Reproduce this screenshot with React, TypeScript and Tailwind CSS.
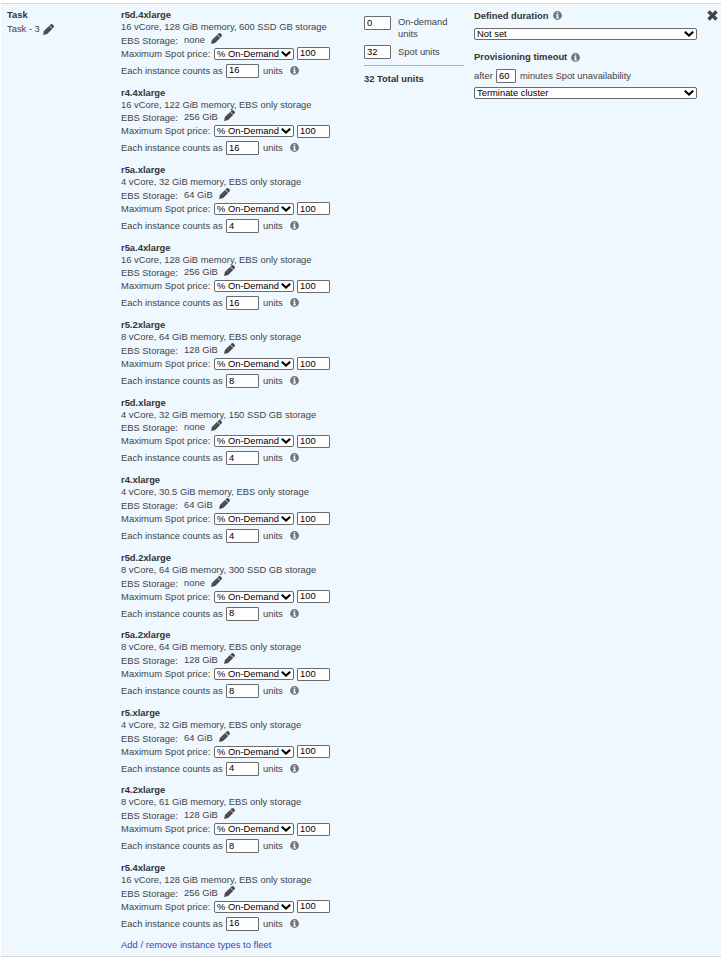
import React from "react";

type Instance = { name: string; spec: string; ebs: string; units: number };

const INSTANCES: Instance[] = [
  { name: "r5d.4xlarge", spec: "16 vCore, 128 GiB memory, 600 SSD GB storage", ebs: "none", units: 16 },
  { name: "r4.4xlarge", spec: "16 vCore, 122 GiB memory, EBS only storage", ebs: "256 GiB", units: 16 },
  { name: "r5a.xlarge", spec: "4 vCore, 32 GiB memory, EBS only storage", ebs: "64 GiB", units: 4 },
  { name: "r5a.4xlarge", spec: "16 vCore, 128 GiB memory, EBS only storage", ebs: "256 GiB", units: 16 },
  { name: "r5.2xlarge", spec: "8 vCore, 64 GiB memory, EBS only storage", ebs: "128 GiB", units: 8 },
  { name: "r5d.xlarge", spec: "4 vCore, 32 GiB memory, 150 SSD GB storage", ebs: "none", units: 4 },
  { name: "r4.xlarge", spec: "4 vCore, 30.5 GiB memory, EBS only storage", ebs: "64 GiB", units: 4 },
  { name: "r5d.2xlarge", spec: "8 vCore, 64 GiB memory, 300 SSD GB storage", ebs: "none", units: 8 },
  { name: "r5a.2xlarge", spec: "8 vCore, 64 GiB memory, EBS only storage", ebs: "128 GiB", units: 8 },
  { name: "r5.xlarge", spec: "4 vCore, 32 GiB memory, EBS only storage", ebs: "64 GiB", units: 4 },
  { name: "r4.2xlarge", spec: "8 vCore, 61 GiB memory, EBS only storage", ebs: "128 GiB", units: 8 },
  { name: "r5.4xlarge", spec: "16 vCore, 128 GiB memory, EBS only storage", ebs: "256 GiB", units: 16 },
];

function Pencil({ className = "" }: { className?: string }) {
  return (
    <svg viewBox="0 0 11 11" className={`block h-[11px] w-[11px] shrink-0 ${className}`} fill="#484848">
      <path d="M0.1 10.9 L0.9 6.9 L6 1.9 L9.2 5 L4.1 10 Z" />
      <path d="M6.4 1.5 L7.5 0.5 Q8.6 -0.3 9.7 0.6 L10.4 1.3 Q11.3 2.3 10.5 3.5 L9.6 4.6 Z" />
      <path d="M2.8 7.6 L6.4 4.1" stroke="#7d8083" strokeWidth="0.5" />
    </svg>
  );
}

function Info({ className = "" }: { className?: string }) {
  return (
    <svg viewBox="0 0 10 10" className={`block h-[9px] w-[9px] shrink-0 ${className}`}>
      <circle cx="5" cy="5" r="4.9" fill="#747474" />
      <path d="M4.1 1.3h1.8v1.5H4.1zM3.4 3.7h2.5v3.5h.8v1.1H3.3V7.2h.8V4.8h-.7z" fill="#eff7ff" />
    </svg>
  );
}

function Field({ value, className }: { value: string | number; className: string }) {
  return (
    <input
      readOnly
      value={value}
      className={`block shrink-0 rounded-[1px] border border-[#6b6b6b] bg-white p-0 pb-[1.5px] pl-[2px] text-[9.4px] leading-[10px] text-black outline-none ${className}`}
    />
  );
}

function Select({ value, className }: { value: string; className: string }) {
  return (
    <div className={`grid shrink-0 ${className}`}>
      <select
        defaultValue={value}
        className="col-start-1 row-start-1 h-full w-full appearance-none rounded-[2px] border border-[#6b6b6b] bg-white p-0 pl-[2px] text-[9.4px] leading-[10px] text-black outline-none"
      >
        <option>{value}</option>
      </select>
      <svg
        viewBox="0 0 10 6"
        className="pointer-events-none col-start-1 row-start-1 mr-[3px] h-[6px] w-[10px] self-center justify-self-end"
        fill="none"
        stroke="#000"
        strokeWidth="2.1"
      >
        <path d="M0.8 0.8 L5 4.5 L9.2 0.8" />
      </svg>
    </div>
  );
}

function InstanceBlock({ item }: { item: Instance }) {
  return (
    <div className="h-[77.55px]">
      <div className="h-3 font-bold leading-3 text-[#333]">{item.name}</div>
      <div className="h-[12.7px] leading-3">{item.spec}</div>
      <div className="flex h-[13.5px] leading-[14px]">
        <span className="w-[63px]">EBS Storage:</span>
        <span className="-mt-px">{item.ebs}</span>
        <Pencil className="-mt-px ml-[6px]" />
      </div>
      <div className="flex h-[13px] items-center">
        <span className="w-[93px] tracking-[0.07px]">Maximum Spot price:</span>
        <Select value="% On-Demand" className="h-3 w-20" />
        <Field value="100" className="ml-[3px] h-[13px] w-[33px]" />
      </div>
      <div className="mt-[3.5px] flex h-[14px] items-center">
        <span className="w-[105px]">Each instance counts as</span>
        <Field value={item.units} className="h-[14px] w-[33px]" />
        <span className="ml-1 w-[27px]">units</span>
        <Info className="-mt-px" />
      </div>
    </div>
  );
}

export default function App() {
  return (
    <div className="h-[957px] w-[726px] overflow-hidden bg-white pl-px pt-[3px] font-['Liberation_Sans',Arial,sans-serif] text-[9.4px] leading-3 text-[#444]">
      <div className="flex h-[954px] w-[720px] border-y border-[#d5d8da] bg-[#eff7ff] pt-[5px]">
        <div className="w-[120px] pl-[6px]">
          <div className="font-bold text-[#333]">Task</div>
          <div className="mt-[2px] flex items-center">
            <span className="w-[36px]">Task - 3</span>
            <Pencil />
          </div>
        </div>

        <div className="w-[243px]">
          {INSTANCES.map((item) => (
            <InstanceBlock key={item.name} item={item} />
          ))}
          <a className="-mt-px block leading-3 tracking-[0.04px] text-[#2a4bb5]">
            Add / remove instance types to fleet
          </a>
        </div>

        <div className="w-[110px] pt-[7px]">
          <div className="flex">
            <Field value="0" className="h-[14px] w-[27px]" />
            <span className="ml-[7px] w-[60px]">On-demand units</span>
          </div>
          <div className="mt-[5px] flex items-center">
            <Field value="32" className="h-[14px] w-[27px]" />
            <span className="ml-[7px]">Spot units</span>
          </div>
          <div className="mt-[6px] h-px w-[100px] bg-[#aeb4ba]" />
          <div className="mt-[7px] font-bold text-[#333]">32 Total units</div>
        </div>

        <div className="w-[233px] pt-px">
          <div className="flex items-center font-bold text-[#333]">
            <span>Defined duration</span>
            <Info className="-mt-px ml-[5px]" />
          </div>
          <Select value="Not set" className="mt-[6px] h-3 w-[223px]" />
          <div className="mt-[11px] flex items-center font-bold text-[#333]">
            <span>Provisioning timeout</span>
            <Info className="ml-[4px]" />
          </div>
          <div className="mt-[6px] flex h-[14px] items-center">
            <span className="w-[22px]">after</span>
            <Field value="60" className="h-[14px] w-5" />
            <span className="ml-1">minutes Spot unavailability</span>
          </div>
          <Select value="Terminate cluster" className="mt-1 h-3 w-[223px]" />
        </div>

        <svg viewBox="0 0 11 11" className="mt-[1px] h-[11px] w-[11px]" fill="#444">
          <path d="M2.7 0.3 L5.5 3.1 L8.3 0.3 L10.7 2.7 L7.9 5.5 L10.7 8.3 L8.3 10.7 L5.5 7.9 L2.7 10.7 L0.3 8.3 L3.1 5.5 L0.3 2.7 Z" />
        </svg>
      </div>
    </div>
  );
}
